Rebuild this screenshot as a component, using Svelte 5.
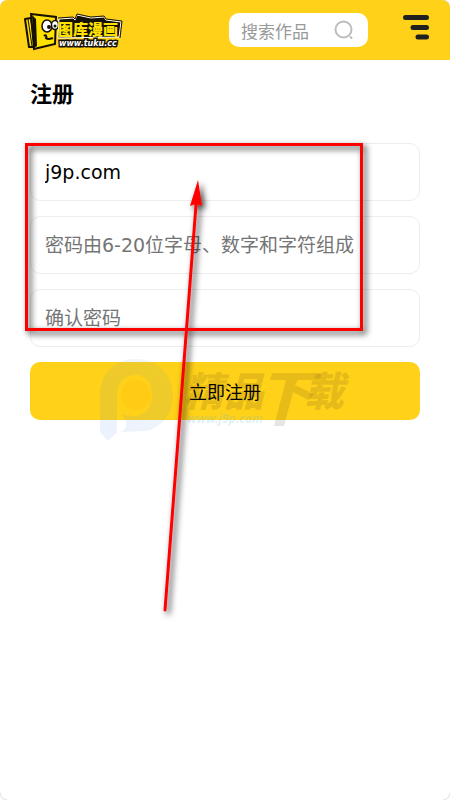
<script>
  let username = 'j9p.com'
  let password = ''
  let confirm = ''
  let keyword = ''
</script>

<div class="page">
  <header>
    <a class="logo" href="#home" aria-label="图库漫画">
      <svg width="102" height="42" viewBox="0 0 102 42">
        <path d="M3 10L9 9L13 38L7 38Z" fill="#ffe100" stroke="#151105" stroke-width="2" stroke-linejoin="round" />
        <path d="M6 10L10 37" fill="none" stroke="#151105" />
        <path d="M9 5L34 8L33 35L12 40Z" fill="#ffe100" stroke="#151105" stroke-width="2" />
        <path d="M10 6L14 10L15 37L12 39Z" fill="#151105" />
        <path d="M22 27C24 25 25 28 24 29C26 31 28 30 31 29" fill="none" stroke="#151105" stroke-width="2" />
        <ellipse cx="25" cy="17" rx="5" ry="6" fill="#fff" stroke="#151105" stroke-width="1.5" />
        <ellipse cx="33" cy="16" rx="3.5" ry="4.5" fill="#fff" stroke="#151105" stroke-width="1.5" />
        <circle cx="27" cy="18" r="2" fill="#151105" />
        <circle cx="33" cy="17" r="1.5" fill="#151105" />
        <path d="M37 10L51 9L53 11L55 6L69 9L82 8L84 11L99 13L97 28L36 29Z" fill="#151105" stroke="#fff" />
        <path d="M36 9L51 8L53 10L55 5L69 8L82 7L84 10L100 12L98 29" fill="none" stroke="#151105" />
        <text class="name" x="36" y="26">图库漫画</text>
        <text class="domain" x="37" y="37">www.tuku.cc</text>
      </svg>
    </a>
    <form class="search">
      <input type="search" aria-label="搜索作品" placeholder="搜索作品" bind:value={keyword} />
      <button type="button" aria-label="搜索">
        <svg width="20" height="20" viewBox="0 0 20 20" fill="none" stroke="#bcbcbc" stroke-width="2" stroke-linecap="round">
          <circle cx="9.5" cy="9.5" r="8" />
          <path d="M16.5 17L17.5 18" />
        </svg>
      </button>
    </form>
    <button class="menu" type="button" aria-label="菜单">
      <svg width="28" height="26" viewBox="0 0 28 26" fill="none" stroke="#202020" stroke-width="5" stroke-linecap="round">
        <path d="M3.5 3.5H24.5M11 13.5H24.5M16 23H24.5" />
      </svg>
    </button>
  </header>

  <main>
    <h1>注册</h1>
    <form class="register">
      <input type="text" aria-label="用户名" bind:value={username} />
      <input type="password" aria-label="密码" placeholder="密码由6-20位字母、数字和字符组成" bind:value={password} />
      <input type="password" aria-label="确认密码" placeholder="确认密码" bind:value={confirm} />
      <button type="button">立即注册</button>
    </form>

    <!-- watermark and callout, drawn over the form -->
    <svg class="overlay" width="450" height="640" viewBox="0 0 450 640" aria-hidden="true">
      <defs>
        <linearGradient id="mark" x1="0" y1="1" x2="1" y2="0">
          <stop offset="0" stop-color="#2c6cf0" />
          <stop offset="1" stop-color="#4ea0c8" />
        </linearGradient>
        <filter id="shadow" x="-20%" y="-20%" width="150%" height="150%">
          <feDropShadow dx="3" dy="3" stdDeviation="3" flood-color="#000" flood-opacity="0.8" />
        </filter>
      </defs>
      <g class="watermark">
        <path d="M100 372V335C100 312 116 299 136 299C158 299 173 315 173 335C173 355 161 368 146 371L121 372C126 369 130 365 121 354C141 361 152 350 152 335C152 323 146 315 136 315C124 315 117 323 117 336V372L108 381Z" fill="url(#mark)" opacity="0.09" />
        <circle cx="136" cy="335" r="15" fill="#ffae00" opacity="0.15" />
        <text class="mark-name" x="184" y="346">精品</text>
        <path d="M272 313H322L320 320H298L295 325L314 334L308 340L293 332L284 366H274L286 320H270Z" />
        <text class="mark-name" x="304" y="346">载</text>
        <text class="mark-domain" x="187" y="363">www.j9p.com</text>
      </g>
      <g filter="url(#shadow)">
        <rect x="26.5" y="84.5" width="335" height="185" fill="none" stroke="#f00" stroke-width="3" />
        <path d="M165 550L196 145" stroke="#f00" stroke-width="3" stroke-linecap="round" />
        <path d="M198 120L202 146L196 144L190 146Z" fill="#f00" />
      </g>
    </svg>
  </main>
</div>

<style>
  :global(body) {
    margin: 0;
    background: #fff;
  }

  .page {
    min-height: 100vh;
    border-radius: 8px;
    overflow: hidden;
    background: #fff;
    box-shadow: 0 0 1px #888;
    font-family: "DejaVu Sans", "Noto Sans CJK SC", sans-serif;
  }

  header {
    display: flex;
    align-items: center;
    height: 60px;
    padding: 0 20px 0 22px;
    background: #ffd119;
  }

  .logo {
    display: flex;
    margin-right: auto;
  }

  .name {
    font: 900 15px "Noto Sans CJK SC", sans-serif;
    fill: #ffe100;
  }

  .domain {
    font: italic bold 8px "DejaVu Sans", sans-serif;
    fill: #fff;
    stroke: #151105;
    stroke-width: 3px;
    paint-order: stroke;
  }

  .search {
    display: flex;
    align-items: center;
    box-sizing: border-box;
    width: 139px;
    height: 34px;
    padding: 0 14px 0 12px;
    margin-right: 34px;
    border-radius: 10px;
    background: #fff;
  }

  .search input {
    flex: 1;
    min-width: 0;
    padding: 0;
    border: 0;
    outline: 0;
    background: none;
    font: 17px "Noto Sans CJK SC", sans-serif;
  }

  .search input::placeholder {
    color: #999;
  }

  header button {
    display: flex;
    padding: 0;
    border: 0;
    background: none;
    cursor: pointer;
  }

  .menu {
    margin-bottom: 6px;
  }

  main {
    position: relative;
    padding: 18px 30px 0;
  }

  h1 {
    margin: 0 0 31px;
    font-size: 22px;
    line-height: 34px;
  }

  .register {
    display: flex;
    flex-direction: column;
    gap: 15px;
  }

  .register input {
    box-sizing: border-box;
    width: 100%;
    height: 58px;
    padding: 0 14px;
    border: 1px solid #ededed;
    border-radius: 10px;
    outline: 0;
    background: #fff;
    color: #000;
    font-family: inherit;
    font-size: 19px;
  }

  .register input::placeholder {
    color: #757575;
  }

  .register button {
    height: 58px;
    padding: 0;
    border: 0;
    border-radius: 10px;
    background: #ffd119;
    color: #000;
    font-family: inherit;
    font-size: 18px;
    cursor: pointer;
  }

  .overlay {
    position: absolute;
    top: 0;
    left: 0;
    pointer-events: none;
  }

  .watermark {
    fill: rgba(60, 40, 30, 0.12);
  }

  .mark-name {
    font: italic 900 40px "Noto Sans CJK SC", sans-serif;
  }

  .mark-domain {
    font: italic bold 12px "Noto Sans", sans-serif;
    fill: rgba(80, 180, 230, 0.2);
  }
</style>
